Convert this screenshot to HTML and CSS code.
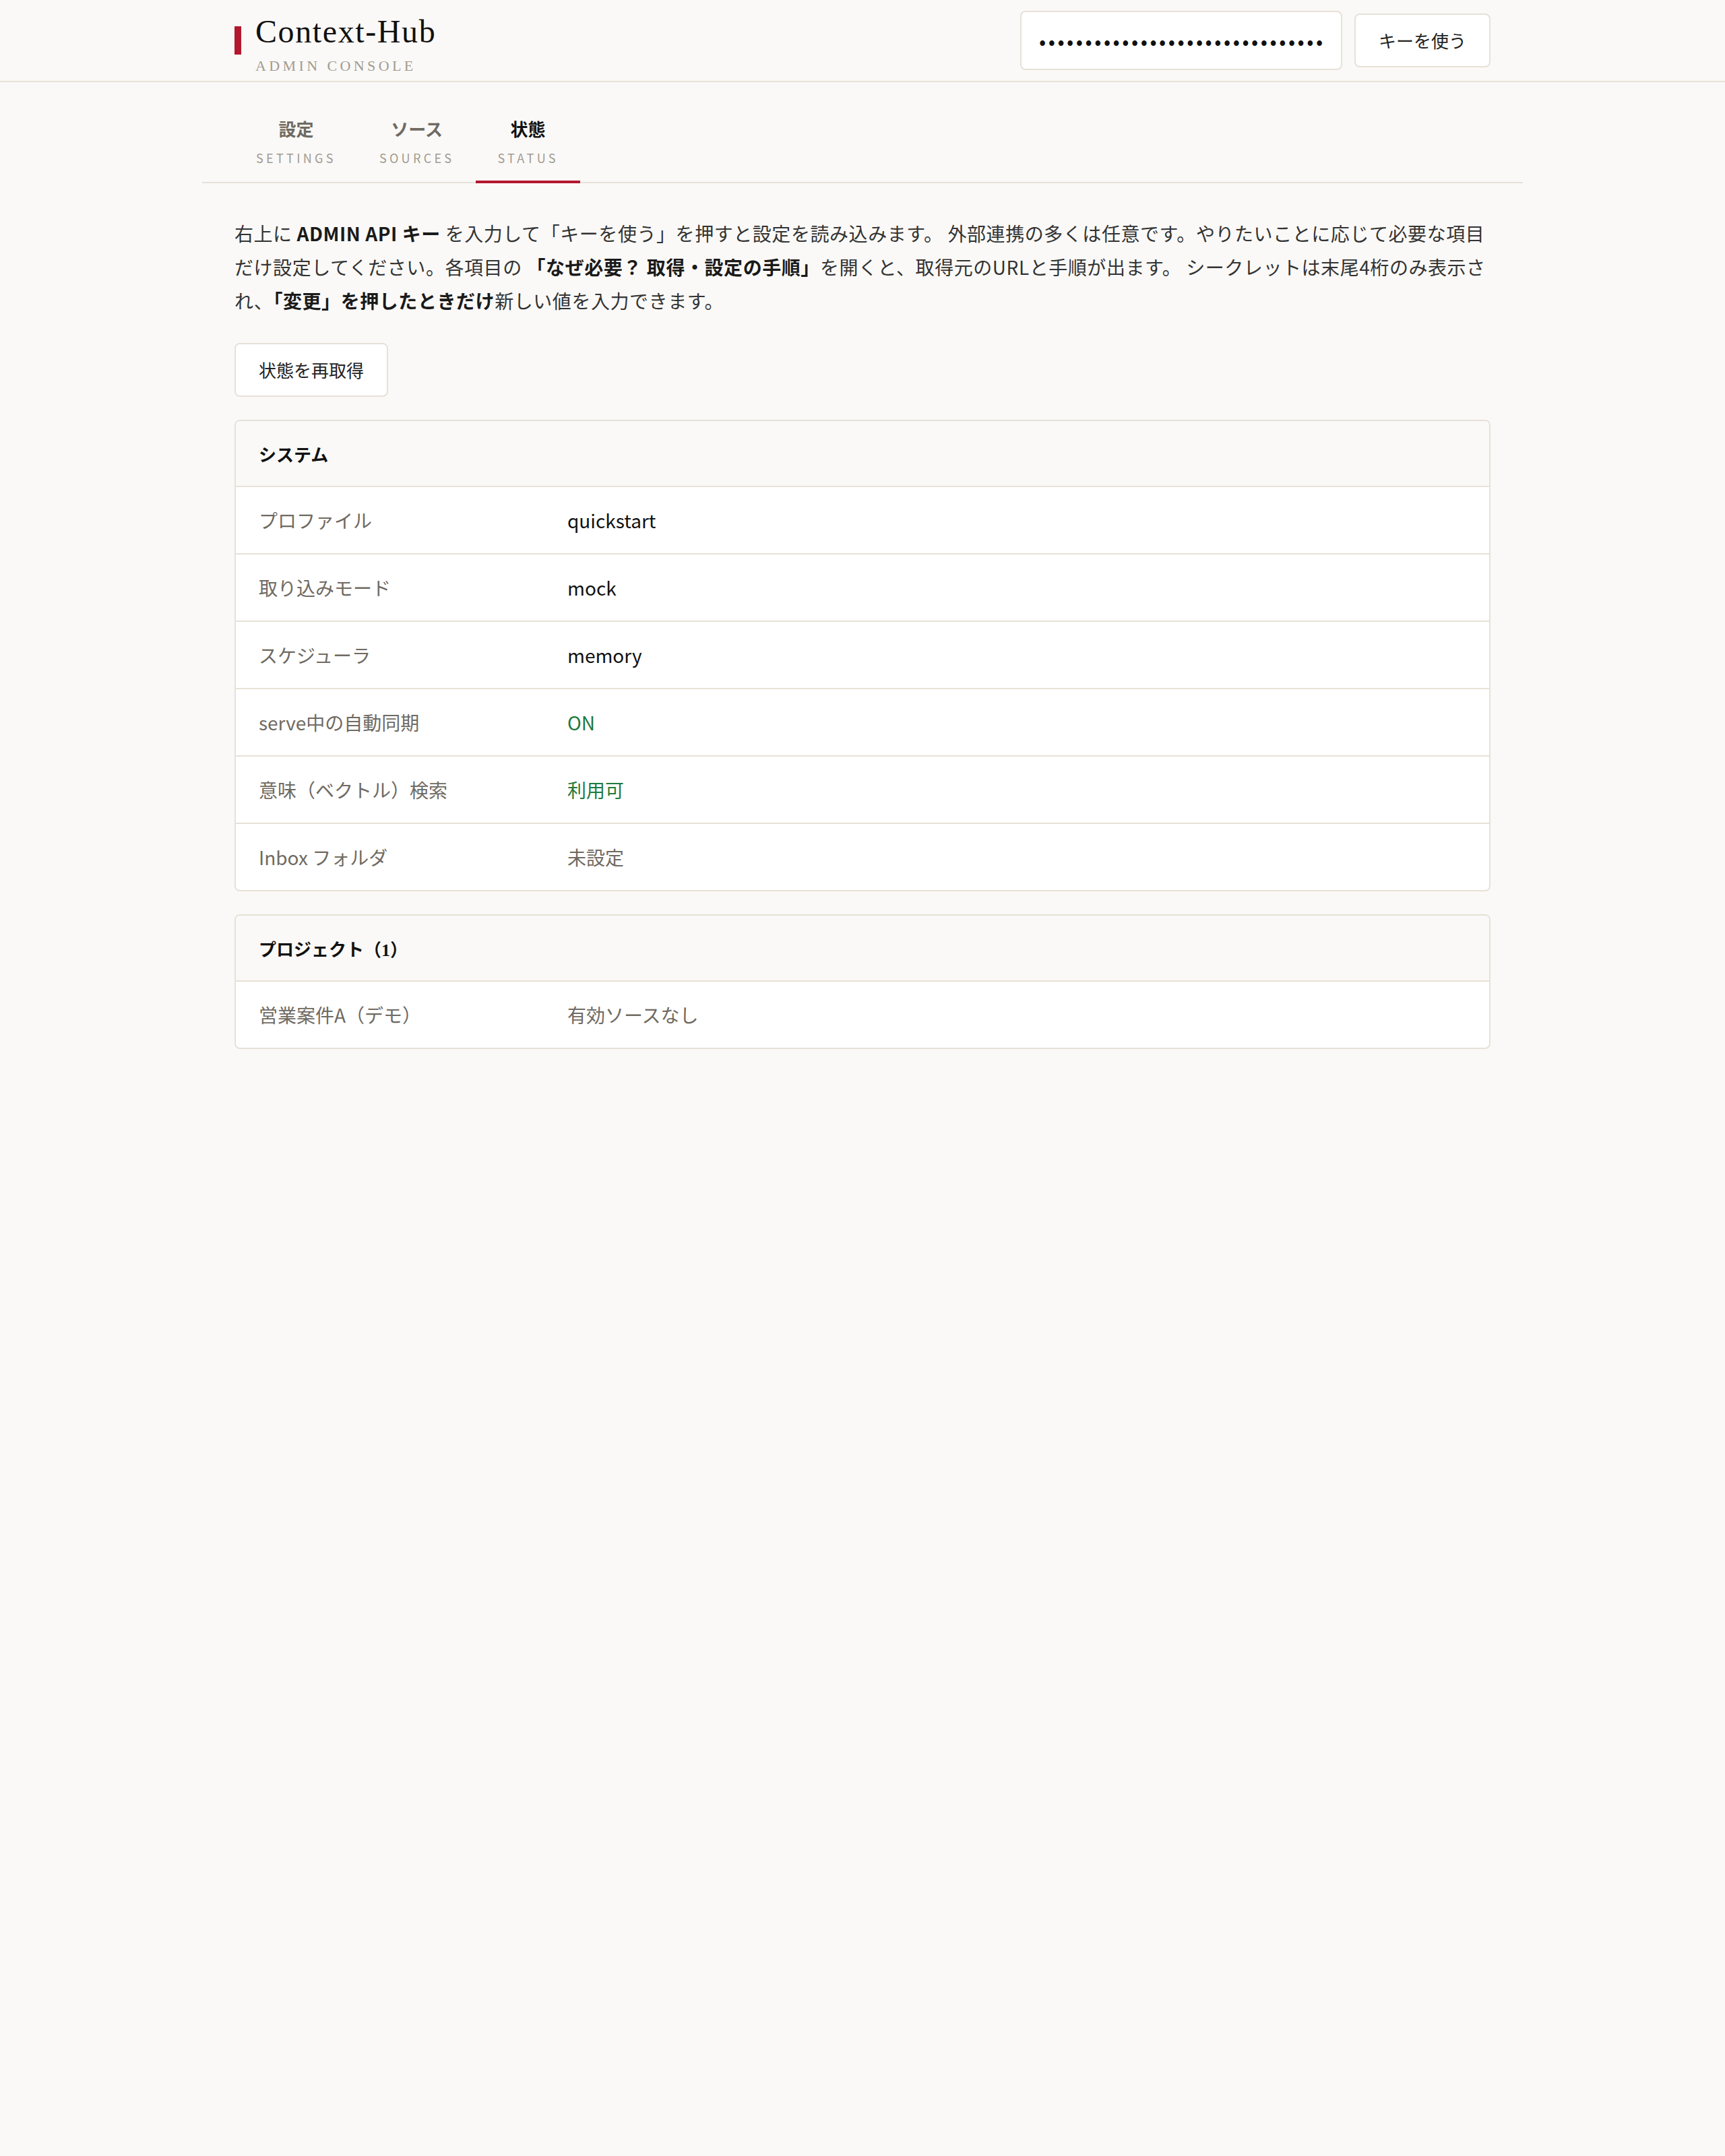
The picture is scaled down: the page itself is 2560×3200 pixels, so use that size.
FILE: index.html
```html
<!DOCTYPE html>
<html lang="ja">
<head>
    <meta charset="UTF-8">
    <meta name="viewport" content="width=device-width, initial-scale=1.0">
    <title>Context-Hub Admin Console</title>
    <link rel="stylesheet" href="styles.css">
</head>
<body>
    <!-- ヘッダー -->
    <header class="topbar">
        <div class="topbar-inner">
            <div class="brand">
                <span class="brand-mark"></span>
                <div class="brand-text">
                    <div class="brand-title">Context-Hub</div>
                    <div class="brand-sub">ADMIN CONSOLE</div>
                </div>
            </div>
            <div class="key-box">
                <input type="password" class="key-input" value="ch-admin-0000000000000000000000000000000000">
                <button class="btn">キーを使う</button>
            </div>
        </div>
    </header>

    <main class="container">
        <!-- タブ -->
        <nav class="tabs">
            <a class="tab">
                <span class="tab-ja">設定</span>
                <span class="tab-en">SETTINGS</span>
            </a>
            <a class="tab">
                <span class="tab-ja">ソース</span>
                <span class="tab-en">SOURCES</span>
            </a>
            <a class="tab active">
                <span class="tab-ja">状態</span>
                <span class="tab-en">STATUS</span>
            </a>
        </nav>

        <section class="content">
            <p class="intro">右上に <b>ADMIN API キー</b> を入力して「キーを使う」を押すと設定を読み込みます。 外部連携の多くは任意です。やりたいことに応じて必要な項目だけ設定してください。各項目の <b>「なぜ必要？ 取得・設定の手順」</b>を開くと、取得元のURLと手順が出ます。 シークレットは末尾4桁のみ表示され、<b>「変更」を押したときだけ</b>新しい値を入力できます。</p>

            <button class="btn">状態を再取得</button>

            <!-- システム -->
            <div class="card">
                <div class="card-head">システム</div>
                <div class="row">
                    <div class="row-label">プロファイル</div>
                    <div class="row-value">quickstart</div>
                </div>
                <div class="row">
                    <div class="row-label">取り込みモード</div>
                    <div class="row-value">mock</div>
                </div>
                <div class="row">
                    <div class="row-label">スケジューラ</div>
                    <div class="row-value">memory</div>
                </div>
                <div class="row">
                    <div class="row-label">serve中の自動同期</div>
                    <div class="row-value ok">ON</div>
                </div>
                <div class="row">
                    <div class="row-label">意味（ベクトル）検索</div>
                    <div class="row-value ok">利用可</div>
                </div>
                <div class="row">
                    <div class="row-label">Inbox フォルダ</div>
                    <div class="row-value muted">未設定</div>
                </div>
            </div>

            <!-- プロジェクト -->
            <div class="card">
                <div class="card-head">プロジェクト（1）</div>
                <div class="row">
                    <div class="row-label">営業案件A（デモ）</div>
                    <div class="row-value muted">有効ソースなし</div>
                </div>
            </div>
        </section>
    </main>
</body>
</html>
```

FILE: styles.css
```css
body {
    margin: 0;
    background-color: #faf9f7;
    color: #222;
    font-family: "Noto Sans CJK JP", sans-serif;
    font-size: 28px;
}

/* ヘッダー */
.topbar {
    background-color: #faf9f7;
    border-bottom: 2px solid #e7e1d7;
}

.topbar-inner {
    max-width: 1960px;
    height: 120px;
    margin: 0 auto;
    padding: 0 48px;
    box-sizing: border-box;
    display: flex;
    justify-content: space-between;
    align-items: center;
}

.brand {
    align-self: flex-start;
    display: flex;
    gap: 21px;
    padding-top: 21px;
}

.brand-mark {
    width: 10px;
    height: 42px;
    margin-top: 18px;
    background-color: #b3182f;
}

.brand-title {
    font-family: "Liberation Serif", serif;
    font-size: 48px;
    line-height: 52px;
    color: #111;
    letter-spacing: 1.6px;
}

.brand-sub {
    margin-top: 11px;
    font-family: "Liberation Serif", serif;
    font-size: 22px;
    line-height: 28px;
    letter-spacing: 0.2em;
    color: #a19b91;
}

.key-box {
    display: flex;
    align-items: center;
    gap: 18px;
}

.key-input {
    width: 478px;
    height: 88px;
    box-sizing: border-box;
    padding: 0 26px;
    background: #fff;
    border: 2px solid #e7e1d7;
    border-radius: 8px;
    font-size: 30px;
    letter-spacing: 3.5px;
    color: #111;
    font-family: "Noto Sans CJK JP", sans-serif;
}

.btn {
    padding: 20px 34px;
    background-color: #fff;
    border: 2px solid #e7e1d7;
    border-radius: 8px;
    font-family: "Noto Sans CJK JP", sans-serif;
    font-size: 26px;
    line-height: 36px;
    color: #222;
    cursor: pointer;
}

/* タブ */
.container {
    max-width: 1960px;
    margin: 0 auto;
}

.tabs {
    display: flex;
    padding: 0 48px;
    border-bottom: 2px solid #e7e1d7;
}

.tab {
    display: flex;
    flex-direction: column;
    align-items: center;
    padding: 51px 32px 22px;
    margin-bottom: -2px;
    border-bottom: 4px solid transparent;
    cursor: pointer;
}

.tab-ja {
    font-size: 26px;
    line-height: 36px;
    font-weight: 700;
    color: #6f6a62;
}

.tab-en {
    margin-top: 13px;
    font-size: 18px;
    line-height: 24px;
    letter-spacing: 0.24em;
    color: #a19b91;
}

.tab.active {
    border-bottom-color: #b3182f;
}

.tab.active .tab-ja {
    color: #111;
}

/* 本文 */
.content {
    padding: 49px 48px 48px;
}

.intro {
    margin: 0 0 38px;
    line-height: 50px;
    letter-spacing: 0.02em;
    color: #333;
}

.intro b {
    color: #1a1a1a;
}

.card {
    margin-top: 34px;
    background-color: #fff;
    border: 2px solid #e7e1d7;
    border-radius: 8px;
    overflow: hidden;
}

.card-head {
    height: 96px;
    display: flex;
    align-items: center;
    padding: 0 34px;
    background-color: #faf9f7;
    border-bottom: 2px solid #e7e1d7;
    font-family: "Liberation Serif", "Noto Sans CJK JP", serif;
    font-size: 26px;
    font-weight: 700;
    color: #111;
}

.row {
    height: 98px;
    display: flex;
    align-items: center;
    padding: 0 34px;
    border-bottom: 2px solid #e7e1d7;
}

.row:last-child {
    border-bottom: none;
}

.row-label {
    flex: 0 0 458px;
    color: #6f6a62;
}

.row-value {
    color: #111;
}

.row-value.ok {
    color: #1f7a3c;
}

.row-value.muted {
    color: #6f6a62;
}
```
